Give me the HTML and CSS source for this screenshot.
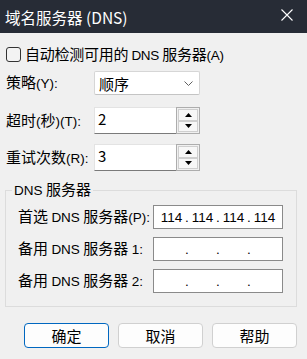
FILE: index.html
```html
<!DOCTYPE html>
<html lang="zh-CN">
<head>
<meta charset="utf-8">
<title>域名服务器 (DNS)</title>
<link rel="stylesheet" href="styles.css">
</head>
<body>
<div class="window">
  <div class="titlebar">
    <span class="title">域名服务器 (DNS)</span>
    <svg class="close" width="12" height="12" viewBox="0 0 12 12"><path d="M0.5 0.5 L11.5 11.5 M11.5 0.5 L0.5 11.5" stroke="#ffffff" stroke-width="1.1" fill="none"/></svg>
  </div>
  <div class="content">
    <label class="check-row">
      <span class="checkbox"></span>
      <span class="check-text">自动检测可用的 <span class="lat">DNS</span> 服务器<span class="lat">(A)</span></span>
    </label>
    <div class="form-row row-select">
      <span class="label">策略<span class="lat">(Y):</span></span>
      <div class="select">
        <span>顺序</span>
        <svg class="chev" width="9" height="5" viewBox="0 0 9 5"><path d="M0.5 0.5 L4.5 4.5 L8.5 0.5" stroke="#606060" stroke-width="1" fill="none"/></svg>
      </div>
    </div>
    <div class="form-row row-spin1">
      <span class="label">超时<span class="lat">(</span>秒<span class="lat">)(T):</span></span>
      <div class="spin">
        <div class="spin-input">2</div>
        <div class="spin-btns">
          <div class="spin-btn"><svg width="7" height="4" viewBox="0 0 7 4"><path d="M3.5 0 L7 4 L0 4 Z" fill="#000"/></svg></div>
          <div class="spin-btn"><svg width="7" height="4" viewBox="0 0 7 4"><path d="M0 0 L7 0 L3.5 4 Z" fill="#000"/></svg></div>
        </div>
      </div>
    </div>
    <div class="form-row row-spin2">
      <span class="label">重试次数<span class="lat">(R):</span></span>
      <div class="spin">
        <div class="spin-input">3</div>
        <div class="spin-btns">
          <div class="spin-btn"><svg width="7" height="4" viewBox="0 0 7 4"><path d="M3.5 0 L7 4 L0 4 Z" fill="#000"/></svg></div>
          <div class="spin-btn"><svg width="7" height="4" viewBox="0 0 7 4"><path d="M0 0 L7 0 L3.5 4 Z" fill="#000"/></svg></div>
        </div>
      </div>
    </div>
    <fieldset class="group">
      <legend><span class="lat">DNS</span> 服务器</legend>
      <div class="ip-row">
        <span class="ip-label">首选 <span class="lat">DNS</span> 服务器<span class="lat">(P):</span></span>
        <div class="ip">
          <span class="seg">114</span><span class="dot">.</span><span class="seg">114</span><span class="dot">.</span><span class="seg">114</span><span class="dot">.</span><span class="seg">114</span>
        </div>
      </div>
      <div class="ip-row">
        <span class="ip-label">备用 <span class="lat">DNS</span> 服务器 <span class="lat">1:</span></span>
        <div class="ip">
          <span class="seg"></span><span class="dot">.</span><span class="seg"></span><span class="dot">.</span><span class="seg"></span><span class="dot">.</span><span class="seg"></span>
        </div>
      </div>
      <div class="ip-row">
        <span class="ip-label">备用 <span class="lat">DNS</span> 服务器 <span class="lat">2:</span></span>
        <div class="ip">
          <span class="seg"></span><span class="dot">.</span><span class="seg"></span><span class="dot">.</span><span class="seg"></span><span class="dot">.</span><span class="seg"></span>
        </div>
      </div>
    </fieldset>
    <div class="buttons">
      <button class="btn btn-default">确定</button>
      <button class="btn">取消</button>
      <button class="btn">帮助</button>
    </div>
  </div>
</div>
</body>
</html>
```

FILE: styles.css
```css
html, body {
  margin: 0;
  padding: 0;
}
body {
  width: 307px;
  height: 359px;
  overflow: hidden;
  background: #f0f0f0;
  font-family: "Noto Sans CJK SC", sans-serif;
  font-size: 15px;
  color: #000;
}
.window {
  display: flex;
  flex-direction: column;
}
.titlebar {
  height: 33px;
  background: #272c36;
  display: flex;
  justify-content: space-between;
  align-items: center;
  padding: 0 14px 0 5px;
  color: #ffffff;
}
.title {
  font-size: 15.5px;
  line-height: 20px;
}
.close {
  display: block;
  align-self: flex-start;
  margin-top: 9px;
}
.content {
  display: flex;
  flex-direction: column;
  padding: 14px 10px 0 5px;
}
.lat {
  font-family: "Liberation Sans", sans-serif;
  font-size: 13.5px;
}
.check-row {
  display: flex;
  align-items: center;
  gap: 4px;
  height: 15px;
  padding-left: 1px;
}
.checkbox {
  width: 13px;
  height: 13px;
  border: 1px solid #333333;
  border-radius: 3px;
  background: #f3f3f3;
}
.check-text {
  line-height: 15px;
  letter-spacing: -0.25px;
}
.form-row {
  display: flex;
  align-items: center;
  padding-left: 1px;
}
.row-select {
  margin-top: 9px;
}
.row-spin1 {
  margin-top: 12px;
}
.row-spin2 {
  margin-top: 10px;
}
.label {
  width: 88px;
  line-height: 20px;
}
.select {
  height: 22px;
  border: 1px solid #d6d6d6;
  border-bottom-color: #c4c4c4;
  border-radius: 2px;
  background: #ffffff;
  display: flex;
  align-items: center;
  justify-content: space-between;
  padding: 0 6px 0 4px;
  width: 94px;
}
.chev {
  display: block;
}
.spin {
  display: flex;
  height: 27px;
  width: 106px;
}
.spin-input {
  flex: 1;
  background: #ffffff;
  border-top: 1px solid #e3e3e3;
  border-left: 1px solid #e3e3e3;
  border-bottom: 1px solid #7a7a7a;
  padding-left: 3px;
  line-height: 22px;
}
.spin-btns {
  width: 20px;
  border: 1px solid #adadad;
  background: #f0f0f0;
  padding: 1px;
  display: flex;
  flex-direction: column;
}
.spin-btn {
  flex: 1;
  border: 1px solid #cfcfcf;
  background: #f7f7f7;
  display: flex;
  align-items: center;
  justify-content: center;
}
.spin-btn svg {
  display: block;
}
.group {
  margin: 8px 0 0 0;
  padding: 4px 13px 13px 12px;
  border: 1px solid #dcdcdc;
  display: flex;
  flex-direction: column;
  gap: 8px;
  min-width: 0;
}
.group legend {
  padding: 0 2px;
  margin-left: -6px;
  line-height: 20px;
}
.ip-row {
  display: flex;
  align-items: center;
  justify-content: space-between;
  height: 24px;
}
.ip-label {
  line-height: 20px;
}
.ip {
  width: 128px;
  height: 22px;
  border: 1px solid #8a8a8a;
  background: #ffffff;
  display: flex;
  justify-content: center;
  align-items: center;
  font-family: "Liberation Sans", sans-serif;
  font-size: 13.5px;
}
.seg {
  width: 27px;
  text-align: center;
}
.dot {
  width: 4px;
  text-align: center;
}
.buttons {
  display: flex;
  justify-content: flex-end;
  gap: 9px;
  margin-top: 16px;
}
.btn {
  width: 85px;
  height: 25px;
  margin: 0;
  padding: 0;
  border: 1px solid #d0d0d0;
  border-radius: 4px;
  background: #fdfdfd;
  font-family: "Noto Sans CJK SC", sans-serif;
  font-size: 15px;
  color: #000;
  line-height: 20px;
}
.btn-default {
  border-color: #0067c0;
}
```
